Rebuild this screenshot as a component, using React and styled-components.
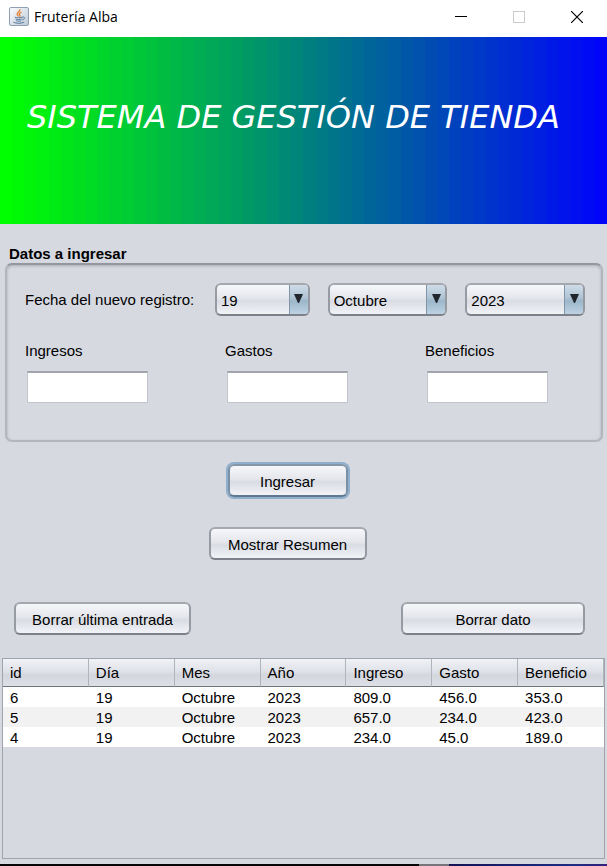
import React, { useId } from "react";
import styled, { createGlobalStyle, css } from "styled-components";

const BAND_COUNT = 50;

const bandedGradient = Array.from({ length: BAND_COUNT }, (_, i) => {
  const t = i / (BAND_COUNT - 1);
  const color = `rgb(0, ${Math.round(255 - 250 * t)}, ${Math.round(250 * t)})`;
  const from = (i * 100) / BAND_COUNT;
  const to = ((i + 1) * 100) / BAND_COUNT;
  return `${color} ${from}% ${to}%`;
}).join(", ");

const GlobalStyle = createGlobalStyle`
  *, *::before, *::after { box-sizing: border-box; }
  body { margin: 0; background: #d6d9e0; }
  button, input, select { font: inherit; color: inherit; }
`;

const Window = styled.div`
  display: flex;
  flex-direction: column;
  min-height: 100vh;
  background: #d6d9e0;
  color: #000;
  font-family: "Liberation Sans", Arial, sans-serif;
  font-size: 15px;
  line-height: 20px;
`;

const TitleBar = styled.header`
  display: flex;
  align-items: center;
  height: 37px;
  padding: 0 1px 3px 9px;
  background: #fff;
`;

const WindowTitle = styled.span`
  flex: 1;
  margin-left: 5px;
  font-family: "Segoe UI", "Open Sans", sans-serif;
  font-size: 14px;
  line-height: 20px;
`;

const CaptionButton = styled.button`
  display: grid;
  place-items: center;
  width: 58px;
  height: 34px;
  padding: 0;
  border: 0;
  background: none;
`;

const Banner = styled.div`
  display: flex;
  height: 187px;
  padding: 58px 27px 0;
  background: linear-gradient(90deg, ${bandedGradient});
`;

const Heading = styled.h1`
  margin: 0;
  color: #fff;
  font-family: "Segoe Print", "DejaVu Sans", sans-serif;
  font-size: 32px;
  font-style: italic;
  font-weight: normal;
  line-height: 44px;
  white-space: nowrap;
`;

const Form = styled.form`
  display: flex;
  flex-direction: column;
`;

const Group = styled.fieldset`
  min-width: 0;
  margin: 20px 4px 0 5px;
  padding: 0;
  border: 0;
`;

const Legend = styled.legend`
  margin-left: 4px;
  padding: 0;
  font-weight: bold;
  line-height: 19px;
`;

const GroupBody = styled.div`
  height: 179px;
  padding: 18px 16px 0 18px;
  border: 2px solid #b3b6bd;
  border-top-color: #94979e;
  border-radius: 7px;
  box-shadow: inset 0 1px 3px #aaadb4, 0 0 1px #c5c8cf;
`;

const DateRow = styled.div`
  display: grid;
  grid-template-columns: 172px 95fr 120fr 120fr;
  gap: 18px;
  align-items: center;
`;

const surface = css`
  border: 2px solid #969aa2;
  border-color: #a5a8af #969aa2 #7c8088;
  border-radius: 6px;
  background: linear-gradient(#f6f7fa 0%, #e4e6ec 45%, #d9dce3 55%, #f1f3f7 100%);
`;

const Combo = styled.div`
  ${surface}
  display: grid;
  grid-template-columns: 1fr 19px;
  height: 33px;
  overflow: hidden;
`;

const ComboSelect = styled.select`
  grid-area: 1 / 1 / 2 / 3;
  min-width: 0;
  padding: 2px 24px 0 4px;
  border: 0;
  background: none;
  appearance: none;
  outline: none;
`;

const ComboArrow = styled.span`
  grid-area: 1 / 2;
  display: flex;
  justify-content: center;
  padding-top: 9px;
  border-left: 1px solid #8195a8;
  background: linear-gradient(#cfdce8 0%, #aec3d4 45%, #9cb6ca 55%, #bdd3e4 100%);
  pointer-events: none;
`;

const AmountRow = styled.div`
  display: grid;
  grid-template-columns: repeat(3, 1fr);
  gap: 77px;
  margin: 25px 37px 0 0;
`;

const Field = styled.label`
  display: flex;
  flex-direction: column;
  gap: 10px;
`;

const TextInput = styled.input`
  width: 100%;
  height: 32px;
  padding: 0 6px;
  border: 1px solid #c2c5cb;
  border-top: 2px solid #a1a4aa;
  background: #fff;
  outline: none;
`;

const InputInset = styled.span`
  display: block;
  padding-left: 2px;
`;

const CenterActions = styled.div`
  display: flex;
  flex-direction: column;
  align-items: center;
  gap: 30px;
  padding: 22px 32px 0 0;
`;

const EdgeActions = styled.div`
  display: flex;
  justify-content: space-between;
  padding: 42px 22px 0 14px;
`;

const Button = styled.button`
  ${surface}
  width: ${(p) => p.$width}px;
  height: 33px;
  padding: 2px 0 0;
  ${(p) =>
    p.$focused &&
    css`
      border-color: #8496a8 #7b90a6 #5d7890;
      box-shadow: 0 0 0 2px #8fb0cd;
    `}
`;

const ScrollPane = styled.div`
  flex: 1;
  margin: 23px 2px 5px 2px;
  border: 1px solid #a0a4ad;
`;

const Table = styled.table`
  width: 100%;
  table-layout: fixed;
  border-collapse: separate;
  border-spacing: 0;
`;

const HeaderCell = styled.th`
  height: 28px;
  padding: 1px 0 0 7px;
  border-right: 1px solid #b0b4bd;
  border-bottom: 1px solid #6f737b;
  background: linear-gradient(#f1f2f6 0%, #dfe2e8 45%, #d3d6dd 60%, #dde0e6 100%);
  font-weight: normal;
  text-align: left;
`;

const Row = styled.tr`
  background: #fff;
  &:nth-child(even) { background: #f2f2f2; }
`;

const Cell = styled.td`
  height: 20px;
  padding: 1px 0 0 7px;
  line-height: 19px;
`;

const Desktop = styled.div`
  height: 2px;
  background: linear-gradient(90deg, #05050a 0 69%, #77757c 69% 74%, #151254 74%, #1d2c83 94%, #33217c);
`;

function JavaIcon() {
  return (
    <svg width="20" height="20" viewBox="0 0 20 20" fill="none" aria-hidden="true">
      <defs>
        <linearGradient id="tile" x1="0" y1="0" x2="1" y2="1">
          <stop stopColor="#fdfdfe" />
          <stop offset="1" stopColor="#bcc9d6" />
        </linearGradient>
      </defs>
      <rect x="0.5" y="0.5" width="19" height="18" rx="1.5" fill="url(#tile)" stroke="#8fa0b2" />
      <path d="M10.8 2.3c1 2.1-3.6 3.2-2.6 5.2.3.8 1.2 1.3 1.2 2.1M12.5 5.1c-1.7.7-3 1.7-1.7 3.1.5.6.2 1-.2 1.6" stroke="#e58136" strokeWidth="1.3" />
      <path d="M5.8 10.2c2.2.8 5.4.7 7.8 0M6.5 12c1.8.7 4.5.7 6.3 0M7.2 13.8c1.5.5 3.4.5 5 0M13.4 10.1c3-.7 2.7 2.1-.2 2.8M4.5 15.2c2.6 1.5 8.3 1.4 10.6-.1" stroke="#58799b" strokeWidth="1" />
    </svg>
  );
}

function DateCombo({ label, value }) {
  return (
    <Combo>
      <ComboSelect aria-label={label} defaultValue={value}>
        <option value={value}>{value}</option>
      </ComboSelect>
      <ComboArrow>
        <svg width="9" height="9" viewBox="0 0 9 9" aria-hidden="true">
          <path d="M0 0H9L5 9H4Z" fill="#20262c" />
        </svg>
      </ComboArrow>
    </Combo>
  );
}

function AmountField({ label }) {
  const id = useId();
  return (
    <Field htmlFor={id}>
      {label}
      <InputInset>
        <TextInput id={id} type="text" />
      </InputInset>
    </Field>
  );
}

const columns = ["id", "Día", "Mes", "Año", "Ingreso", "Gasto", "Beneficio"];

const records = [
  ["6", "19", "Octubre", "2023", "809.0", "456.0", "353.0"],
  ["5", "19", "Octubre", "2023", "657.0", "234.0", "423.0"],
  ["4", "19", "Octubre", "2023", "234.0", "45.0", "189.0"],
];

export default function App() {
  return (
    <>
      <GlobalStyle />
      <Window>
        <TitleBar>
          <JavaIcon />
          <WindowTitle>Frutería Alba</WindowTitle>
          <CaptionButton aria-label="Minimizar">
            <svg width="12" height="12" stroke="#000" aria-hidden="true">
              <path d="M0 5.5H12" />
            </svg>
          </CaptionButton>
          <CaptionButton aria-label="Maximizar" disabled>
            <svg width="12" height="12" fill="none" stroke="#cbcbcb" aria-hidden="true">
              <rect x="0.5" y="0.5" width="11" height="11" />
            </svg>
          </CaptionButton>
          <CaptionButton aria-label="Cerrar">
            <svg width="12" height="12" stroke="#000" strokeWidth="1.2" aria-hidden="true">
              <path d="M0 0L12 12M12 0L0 12" />
            </svg>
          </CaptionButton>
        </TitleBar>

        <Banner>
          <Heading>SISTEMA DE GESTIÓN DE TIENDA</Heading>
        </Banner>

        <Form onSubmit={(e) => e.preventDefault()}>
          <Group>
            <Legend>Datos a ingresar</Legend>
            <GroupBody>
              <DateRow>
                <span>Fecha del nuevo registro:</span>
                <DateCombo label="Día" value="19" />
                <DateCombo label="Mes" value="Octubre" />
                <DateCombo label="Año" value="2023" />
              </DateRow>
              <AmountRow>
                <AmountField label="Ingresos" />
                <AmountField label="Gastos" />
                <AmountField label="Beneficios" />
              </AmountRow>
            </GroupBody>
          </Group>
          <CenterActions>
            <Button type="submit" $width={120} $focused>Ingresar</Button>
            <Button type="button" $width={158}>Mostrar Resumen</Button>
          </CenterActions>
          <EdgeActions>
            <Button type="button" $width={177}>Borrar última entrada</Button>
            <Button type="button" $width={184}>Borrar dato</Button>
          </EdgeActions>
        </Form>

        <ScrollPane>
          <Table>
            <thead>
              <tr>
                {columns.map((name) => (
                  <HeaderCell key={name} scope="col">{name}</HeaderCell>
                ))}
              </tr>
            </thead>
            <tbody>
              {records.map((record) => (
                <Row key={record[0]}>
                  {record.map((value, i) => (
                    <Cell key={columns[i]}>{value}</Cell>
                  ))}
                </Row>
              ))}
            </tbody>
          </Table>
        </ScrollPane>
        <Desktop />
      </Window>
    </>
  );
}
